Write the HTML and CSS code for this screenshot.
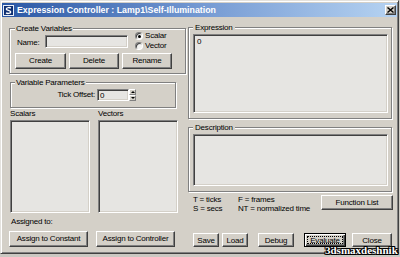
FILE: index.html
```html
<!DOCTYPE html>
<html>
<head>
<meta charset="utf-8">
<title>Expression Controller</title>
<link rel="stylesheet" href="styles.css">
</head>
<body>
<div class="window">
  <div class="titlebar">
    <svg class="app-icon" viewBox="0 0 11 11" width="11" height="11">
      <rect x="0.5" y="0.5" width="10" height="10" fill="#0e2f72" stroke="#e8eef8" stroke-width="1"/>
      <path d="M7.8 3.2 C7 2.2 3.4 2.3 3.3 4 C3.2 5.6 7.8 5.2 7.7 7 C7.6 8.7 4 8.8 3.1 7.7" fill="none" stroke="#fff" stroke-width="1.4"/>
    </svg>
    <span class="title">Expression Controller : Lamp1\Self-Illumination</span>
    <span class="close-btn">
      <svg viewBox="0 0 7 6" width="7" height="6"><path d="M0.5 0.5 L6.5 5.5 M6.5 0.5 L0.5 5.5" stroke="#000" stroke-width="1.4"/></svg>
    </span>
  </div>
  <div class="client">
    <div class="col-left">
      <fieldset class="group grp-create">
        <legend>Create Variables</legend>
        <div class="create-row">
          <span class="name-label">Name:</span>
          <div class="edit name-edit"></div>
          <div class="radios">
            <div class="radio-row"><span class="radio checked"></span><span>Scalar</span></div>
            <div class="radio-row"><span class="radio"></span><span>Vector</span></div>
          </div>
        </div>
        <div class="create-btns">
          <button class="btn btn-create">Create</button>
          <button class="btn btn-delete">Delete</button>
          <button class="btn btn-rename">Rename</button>
        </div>
      </fieldset>
      <fieldset class="group grp-params">
        <legend>Variable Parameters</legend>
        <div class="params-row">
          <span class="tick-label">Tick Offset:</span>
          <div class="spinner">
            <div class="edit spin-edit">0</div>
            <div class="spin-arrows">
              <span class="spin-half"><span class="tri-up"></span></span>
              <span class="spin-half"><span class="tri-down"></span></span>
            </div>
          </div>
        </div>
      </fieldset>
      <div class="lists">
        <div class="list-col">
          <div class="list-cap">Scalars</div>
          <div class="edit listbox"></div>
        </div>
        <div class="list-col">
          <div class="list-cap">Vectors</div>
          <div class="edit listbox"></div>
        </div>
      </div>
      <div class="assigned">Assigned to:</div>
      <div class="assign-btns">
        <button class="btn btn-assign">Assign to Constant</button>
        <button class="btn btn-assign">Assign to Controller</button>
      </div>
    </div>
    <div class="col-right">
      <fieldset class="group grp-expr">
        <legend>Expression</legend>
        <div class="edit expr-edit">0</div>
      </fieldset>
      <fieldset class="group grp-desc">
        <legend>Description</legend>
        <div class="edit desc-edit"></div>
      </fieldset>
      <div class="info-row">
        <div class="info-col info-col1">
          <div>T = ticks</div>
          <div>S = secs</div>
        </div>
        <div class="info-col">
          <div>F = frames</div>
          <div>NT = normalized time</div>
        </div>
        <button class="btn btn-func">Function List</button>
      </div>
      <div class="action-btns">
        <button class="btn btn-save">Save</button>
        <button class="btn btn-load">Load</button>
        <button class="btn btn-debug">Debug</button>
        <button class="btn btn-eval">Evaluate</button>
        <button class="btn btn-close">Close</button>
      </div>
    </div>
  </div>
  <div class="watermark">3dsmaxdeshnik</div>
</div>
</body>
</html>
```

FILE: styles.css
```css
* { box-sizing: border-box; }

html, body { margin: 0; padding: 0; }

body {
  width: 400px;
  height: 257px;
  overflow: hidden;
  background: #cbc8c2;
  font-family: "Liberation Sans", Arial, sans-serif;
  font-size: 8px;
  line-height: 10px;
  letter-spacing: -0.2px;
  color: #000;
}

.window {
  position: relative;
  width: 399px;
  height: 254px;
  background: #d4d0c8;
  border: 1px solid;
  border-color: #e4e2de #404040 #404040 #e4e2de;
  box-shadow: inset 1px 1px 0 #fff, inset -1px -1px 0 #808080;
  display: flex;
  flex-direction: column;
}

/* ---------- title bar ---------- */
.titlebar {
  margin: 2px 1px 0 1px;
  height: 14px;
  flex: none;
  background: linear-gradient(90deg, #2a57a4 0%, #7499d2 50%, #b6d3f2 100%);
  display: flex;
  align-items: center;
  padding: 0 1px 0 1px;
}

.app-icon { flex: none; display: block; }

.title {
  flex: 1;
  margin-left: 3px;
  color: #fff;
  font-weight: bold;
  font-size: 8.8px;
  letter-spacing: 0;
  white-space: nowrap;
}

.close-btn {
  flex: none;
  width: 11px;
  height: 10px;
  background: #d4d0c8;
  border: 1px solid;
  border-color: #fff #404040 #404040 #fff;
  box-shadow: inset -1px -1px 0 #808080;
  display: flex;
  align-items: center;
  justify-content: center;
}
.close-btn svg { display: block; }

/* ---------- client ---------- */
.client {
  flex: 1;
  display: flex;
  padding: 6px 4px 0 8px;
}

.col-left {
  width: 179px;
  flex: none;
  display: flex;
  flex-direction: column;
  align-items: flex-start;
}

.col-right {
  width: 205px;
  flex: none;
  display: flex;
  flex-direction: column;
  align-items: flex-start;
}

/* ---------- group boxes ---------- */
.group {
  margin: 0;
  min-width: 0;
  border: 1px solid #808080;
  box-shadow: 1px 1px 0 #fff, inset 1px 1px 0 #fff;
}

.group > legend {
  margin: 0;
  padding: 0 1px;
  height: 9px;
  line-height: 9px;
  background: #d4d0c8;
}

.grp-create {
  width: 177px;
  margin-top: 1px;
  padding: 0 4px 4px 5px;
}

.grp-params {
  width: 166px;
  margin: 4px 0 0 1px;
  padding: 2px 3px 6px 4px;
}

.grp-expr {
  width: 204px;
  padding: 2px 3px 5px 4px;
}
.grp-expr > legend, .grp-desc > legend { padding: 0 2px; }

.grp-desc {
  width: 204px;
  margin-top: 4px;
  padding: 2px 3px 5px 4px;
}

/* ---------- sunken edits ---------- */
.edit {
  background: #e6e5e2;
  border: 1px solid;
  border-color: #808080 #fff #fff #808080;
  box-shadow: inset 1px 1px 0 #404040, inset -1px -1px 0 #d4d0c8;
}

/* ---------- create variables ---------- */
.create-row {
  display: flex;
  align-items: flex-start;
  height: 18px;
}

.name-label {
  width: 28px;
  margin: 5px 0 0 2px;
}

.name-edit {
  width: 83px;
  height: 13px;
  margin-top: 2px;
}

.radios {
  margin: -2px 0 0 7px;
  display: flex;
  flex-direction: column;
}

.radio-row {
  display: flex;
  align-items: center;
  height: 10px;
  gap: 2px;
}

.radio {
  position: relative;
  width: 8px;
  height: 8px;
  border-radius: 50%;
  border: 1px solid;
  border-color: #808080 #fff #fff #808080;
  background: #f4f4f2;
  box-shadow: inset 1px 1px 0 #404040;
}
.radio.checked::after {
  content: "";
  position: absolute;
  left: 2px;
  top: 2px;
  width: 3px;
  height: 3px;
  border-radius: 50%;
  background: #000;
}

.create-btns {
  display: flex;
  gap: 3px;
  margin-top: 2px;
}

/* ---------- buttons ---------- */
.btn {
  margin: 0;
  padding: 0;
  font: inherit;
  letter-spacing: inherit;
  color: #000;
  background: #d4d0c8;
  border: 1px solid;
  border-color: #fff #404040 #404040 #fff;
  box-shadow: inset -1px -1px 0 #808080;
  text-align: center;
  white-space: nowrap;
}

.btn-create { width: 51px; height: 16px; }
.btn-delete, .btn-rename { width: 50px; height: 16px; }

/* ---------- variable parameters ---------- */
.params-row {
  display: flex;
  align-items: center;
  margin-left: 39px;
  height: 12px;
}

.tick-label {
  width: 43px;
  padding-right: 2px;
  text-align: right;
}

.spinner {
  display: flex;
  height: 12px;
}

.spin-edit {
  width: 32px;
  height: 12px;
  padding: 1px 2px 0 2px;
  line-height: 10px;
}

.spin-arrows {
  width: 7px;
  height: 12px;
  display: flex;
  flex-direction: column;
}

.spin-half {
  flex: 1;
  display: flex;
  align-items: center;
  justify-content: center;
  background: #d4d0c8;
  border: 1px solid;
  border-color: #fff #808080 #808080 #fff;
}

.tri-up {
  width: 0; height: 0;
  border-left: 2px solid transparent;
  border-right: 2px solid transparent;
  border-bottom: 2px solid #000;
}
.tri-down {
  width: 0; height: 0;
  border-left: 2px solid transparent;
  border-right: 2px solid transparent;
  border-top: 2px solid #000;
}

/* ---------- lists ---------- */
.lists {
  display: flex;
  gap: 8px;
  margin: 1px 0 0 1px;
}

.list-col { width: 80px; }

.list-cap { height: 10px; }

.listbox {
  margin-top: 1px;
  height: 93px;
}

.assigned {
  margin-top: 4px;
  padding-left: 2px;
  height: 10px;
}

.assign-btns {
  display: flex;
  gap: 8px;
  margin-top: 4px;
}

.btn-assign { width: 79px; height: 16px; }

/* ---------- right column ---------- */
.expr-edit {
  width: 195px;
  height: 79px;
  padding: 2px 3px;
}

.desc-edit {
  width: 195px;
  height: 52px;
}

.info-row {
  width: 205px;
  margin-top: 3px;
  display: flex;
  align-items: flex-start;
  padding-left: 5px;
}

.info-col { line-height: 9px; }
.info-col1 { width: 45px; }

.btn-func {
  margin-left: auto;
  width: 72px;
  height: 15px;
}

.action-btns {
  display: flex;
  margin-top: 20px;
  padding-left: 5px;
}

.action-btns .btn { height: 14px; line-height: 11px; }
.btn-save { width: 26px; }
.btn-load { width: 26px; margin-left: 3px; }
.btn-debug { width: 36px; margin-left: 10px; }
.btn-eval {
  width: 42px;
  margin-left: 10px;
  border: 1px solid #000;
  box-shadow: inset 1px 1px 0 #fff, inset -1px -1px 0 #404040, inset -2px -2px 0 #808080;
  outline: 1px dotted #000;
  outline-offset: -4px;
}
.btn-close { width: 40px; margin-left: 6px; }

/* ---------- watermark ---------- */
.watermark {
  position: absolute;
  left: 324px;
  top: 244px;
  font-family: "Liberation Serif", "Times New Roman", serif;
  font-weight: bold;
  font-size: 11px;
  line-height: 11px;
  letter-spacing: 0;
  color: #fff;
  text-shadow: 1px 0 0 #000, -1px 0 0 #000, 0 1px 0 #000, 0 -1px 0 #000,
               1px 1px 0 #000, -1px -1px 0 #000, 1px -1px 0 #000, -1px 1px 0 #000;
}
```
